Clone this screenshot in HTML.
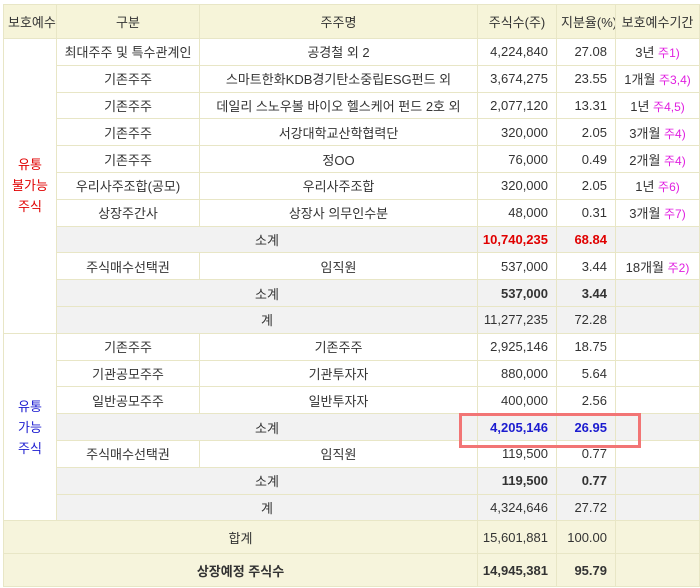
<!DOCTYPE html>
<html><head><meta charset="utf-8"><style>
body{margin:0;background:#fff;width:700px;height:588px;overflow:hidden;position:relative;font-family:"Liberation Sans","Noto Sans CJK KR","NanumGothic",sans-serif;font-size:13px;color:#333}
table{position:absolute;left:3px;top:4px;border-collapse:collapse;table-layout:fixed;width:696px}
td,th{border:1px solid #e8e6c6;padding:0 4px;white-space:nowrap;overflow:hidden;font-weight:normal}
th{background:#f6f4d9;height:33px;text-align:center}
td{height:25.8px;text-align:center}
.r{text-align:right;padding-right:8px}
.g td.s{background:#f2f2f2}
.y td{background:#f6f4dc;height:32px}
.m{color:#e01ee0;font-size:12px}
.red{color:#e00000;font-weight:bold}
.blue{color:#1c1cd0;font-weight:bold}
b{font-weight:bold}
.box{position:absolute;left:459px;top:413px;width:176px;height:29px;border:3px solid #f27575;box-sizing:content-box}
</style></head><body>
<table>
<colgroup><col style="width:53px"><col style="width:143px"><col style="width:278px"><col style="width:79px"><col style="width:59px"><col style="width:84px"></colgroup>
<tr><th>보호예수</th><th>구분</th><th>주주명</th><th>주식수(주)</th><th>지분율(%)</th><th>보호예수기간</th></tr>
<tr><td rowspan="11" style="color:#e00000;line-height:21px">유통<br>불가능<br>주식</td><td>최대주주 및 특수관계인</td><td>공경철 외 2</td><td class="r">4,224,840</td><td class="r">27.08</td><td>3년 <span class="m">주1)</span></td></tr>
<tr><td>기존주주</td><td>스마트한화KDB경기탄소중립ESG펀드 외</td><td class="r">3,674,275</td><td class="r">23.55</td><td>1개월 <span class="m">주3,4)</span></td></tr>
<tr><td>기존주주</td><td>데일리 스노우볼 바이오 헬스케어 펀드 2호 외</td><td class="r">2,077,120</td><td class="r">13.31</td><td>1년 <span class="m">주4,5)</span></td></tr>
<tr><td>기존주주</td><td>서강대학교산학협력단</td><td class="r">320,000</td><td class="r">2.05</td><td>3개월 <span class="m">주4)</span></td></tr>
<tr><td>기존주주</td><td>정OO</td><td class="r">76,000</td><td class="r">0.49</td><td>2개월 <span class="m">주4)</span></td></tr>
<tr><td>우리사주조합(공모)</td><td>우리사주조합</td><td class="r">320,000</td><td class="r">2.05</td><td>1년 <span class="m">주6)</span></td></tr>
<tr><td>상장주간사</td><td>상장사 의무인수분</td><td class="r">48,000</td><td class="r">0.31</td><td>3개월 <span class="m">주7)</span></td></tr>
<tr class="g"><td class="s" colspan="2">소계</td><td class="s r red">10,740,235</td><td class="s r red">68.84</td><td class="s"></td></tr>
<tr><td>주식매수선택권</td><td>임직원</td><td class="r">537,000</td><td class="r">3.44</td><td>18개월 <span class="m">주2)</span></td></tr>
<tr class="g"><td class="s" colspan="2">소계</td><td class="s r"><b>537,000</b></td><td class="s r"><b>3.44</b></td><td class="s"></td></tr>
<tr class="g"><td class="s" colspan="2">계</td><td class="s r">11,277,235</td><td class="s r">72.28</td><td class="s"></td></tr>
<tr><td rowspan="7" style="color:#1c1cd0;line-height:21px">유통<br>가능<br>주식</td><td>기존주주</td><td>기존주주</td><td class="r">2,925,146</td><td class="r">18.75</td><td></td></tr>
<tr><td>기관공모주주</td><td>기관투자자</td><td class="r">880,000</td><td class="r">5.64</td><td></td></tr>
<tr><td>일반공모주주</td><td>일반투자자</td><td class="r">400,000</td><td class="r">2.56</td><td></td></tr>
<tr class="g"><td class="s" colspan="2">소계</td><td class="s r blue">4,205,146</td><td class="s r blue">26.95</td><td class="s"></td></tr>
<tr><td>주식매수선택권</td><td>임직원</td><td class="r">119,500</td><td class="r">0.77</td><td></td></tr>
<tr class="g"><td class="s" colspan="2">소계</td><td class="s r"><b>119,500</b></td><td class="s r"><b>0.77</b></td><td class="s"></td></tr>
<tr class="g"><td class="s" colspan="2">계</td><td class="s r">4,324,646</td><td class="s r">27.72</td><td class="s"></td></tr>
<tr class="y"><td colspan="3">합계</td><td class="r">15,601,881</td><td class="r">100.00</td><td></td></tr>
<tr class="y"><td colspan="3"><b>상장예정 주식수</b></td><td class="r"><b>14,945,381</b></td><td class="r"><b>95.79</b></td><td></td></tr>
</table>
<div class="box"></div>
</body></html>
